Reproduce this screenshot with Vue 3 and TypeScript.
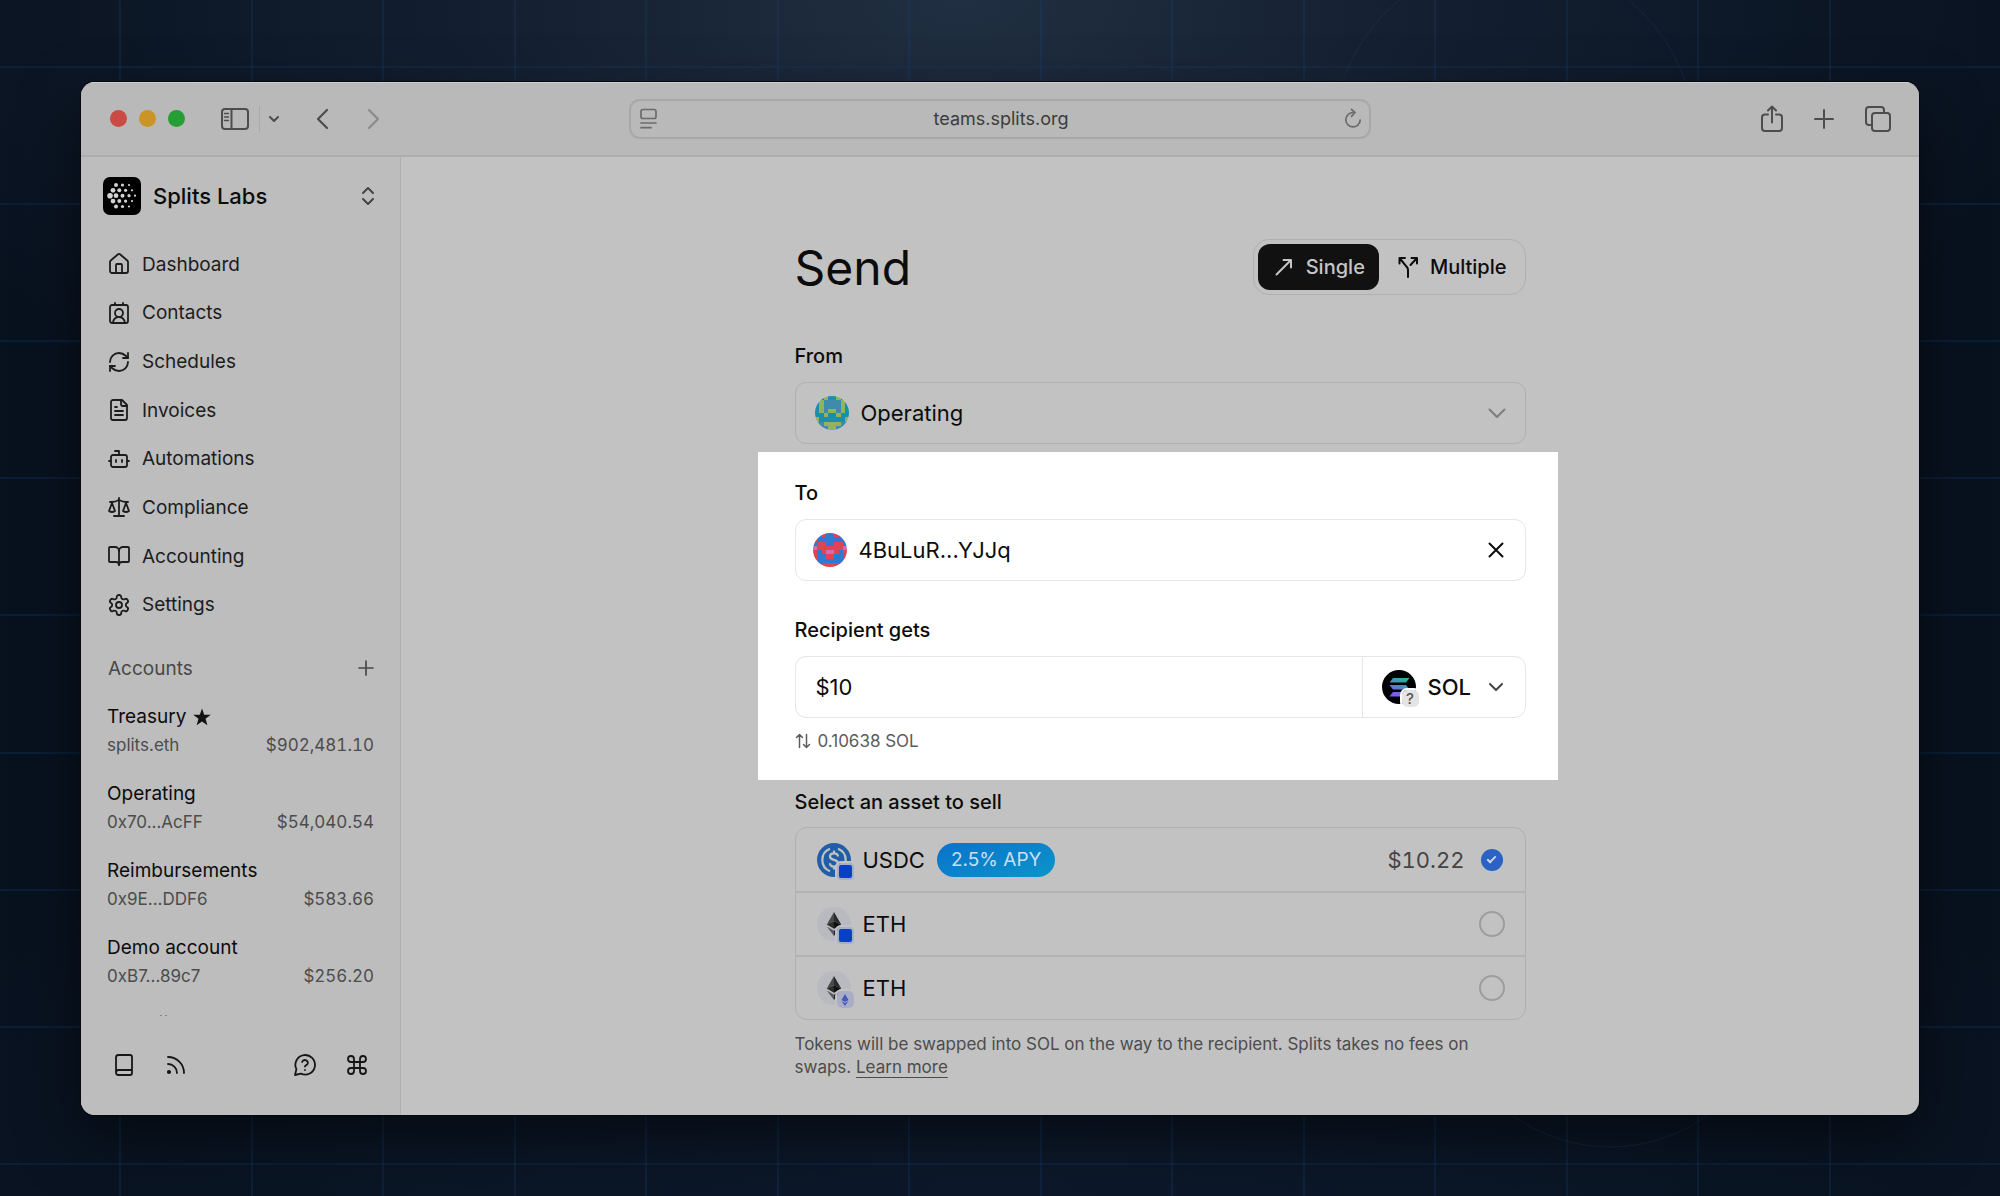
<script setup lang="ts">
import { ref } from 'vue'

interface NavItem { label: string; paths: string[] }
interface Account { name: string; address: string; balance: string; starred?: boolean }
interface Asset { id: string; symbol: string; coin: 'usdc' | 'eth'; chain: 'base' | 'mainnet'; apy?: string; value?: string }

const navItems: NavItem[] = [
  { label: 'Dashboard', paths: ['M15 21v-8a1 1 0 0 0-1-1h-4a1 1 0 0 0-1 1v8', 'M3 10a2 2 0 0 1 .709-1.528l7-5.999a2 2 0 0 1 2.582 0l7 5.999A2 2 0 0 1 21 10v9a2 2 0 0 1-2 2H5a2 2 0 0 1-2-2z'] },
  { label: 'Contacts', paths: ['M16 2v2M8 2v2M17.915 22a6 6 0 0 0-12 0', 'M16 12a4 4 0 1 1-8 0a4 4 0 1 1 8 0z', 'M5 4h14a2 2 0 0 1 2 2v14a2 2 0 0 1-2 2H5a2 2 0 0 1-2-2V6a2 2 0 0 1 2-2z'] },
  { label: 'Schedules', paths: ['M3 12a9 9 0 0 1 9-9 9.75 9.75 0 0 1 6.74 2.74L21 8', 'M21 3v5h-5', 'M21 12a9 9 0 0 1-9 9 9.75 9.75 0 0 1-6.74-2.74L3 16', 'M8 16H3v5'] },
  { label: 'Invoices', paths: ['M15 2H6a2 2 0 0 0-2 2v16a2 2 0 0 0 2 2h12a2 2 0 0 0 2-2V7z', 'M14 2v4a2 2 0 0 0 2 2h4', 'M10 9H8M16 13H8M16 17H8'] },
  { label: 'Automations', paths: ['M12 8V4H8', 'M6 8h12a2 2 0 0 1 2 2v8a2 2 0 0 1-2 2H6a2 2 0 0 1-2-2v-8a2 2 0 0 1 2-2z', 'M2 14h2M20 14h2M15 13v2M9 13v2'] },
  { label: 'Compliance', paths: ['m16 16 3-8 3 8c-.87.65-1.92 1-3 1s-2.13-.35-3-1Z', 'm2 16 3-8 3 8c-.87.65-1.92 1-3 1s-2.13-.35-3-1Z', 'M7 21h10M12 3v18', 'M3 7h2c2 0 5-1 7-2 2 1 5 2 7 2h2'] },
  { label: 'Accounting', paths: ['M12 7v14', 'M3 18a1 1 0 0 1-1-1V4a1 1 0 0 1 1-1h5a4 4 0 0 1 4 4 4 4 0 0 1 4-4h5a1 1 0 0 1 1 1v13a1 1 0 0 1-1 1h-6a3 3 0 0 0-3 3 3 3 0 0 0-3-3z'] },
  { label: 'Settings', paths: ['M12.22 2h-.44a2 2 0 0 0-2 2v.18a2 2 0 0 1-1 1.73l-.43.25a2 2 0 0 1-2 0l-.15-.08a2 2 0 0 0-2.73.73l-.22.38a2 2 0 0 0 .73 2.73l.15.1a2 2 0 0 1 1 1.72v.51a2 2 0 0 1-1 1.74l-.15.09a2 2 0 0 0-.73 2.73l.22.38a2 2 0 0 0 2.73.73l.15-.08a2 2 0 0 1 2 0l.43.25a2 2 0 0 1 1 1.73V20a2 2 0 0 0 2 2h.44a2 2 0 0 0 2-2v-.18a2 2 0 0 1 1-1.73l.43-.25a2 2 0 0 1 2 0l.15.08a2 2 0 0 0 2.73-.73l.22-.39a2 2 0 0 0-.73-2.73l-.15-.08a2 2 0 0 1-1-1.74v-.5a2 2 0 0 1 1-1.74l.15-.09a2 2 0 0 0 .73-2.73l-.22-.38a2 2 0 0 0-2.73-.73l-.15.08a2 2 0 0 1-2 0l-.43-.25a2 2 0 0 1-1-1.73V4a2 2 0 0 0-2-2z', 'M15 12a3 3 0 1 1-6 0a3 3 0 1 1 6 0z'] },
]

const accounts: Account[] = [
  { name: 'Treasury', address: 'splits.eth', balance: '$902,481.10', starred: true },
  { name: 'Operating', address: '0x70...AcFF', balance: '$54,040.54' },
  { name: 'Reimbursements', address: '0x9E...DDF6', balance: '$583.66' },
  { name: 'Demo account', address: '0xB7...89c7', balance: '$256.20' },
]

const assets: Asset[] = [
  { id: 'usdc-base', symbol: 'USDC', coin: 'usdc', chain: 'base', apy: '2.5% APY', value: '$10.22' },
  { id: 'eth-base', symbol: 'ETH', coin: 'eth', chain: 'base' },
  { id: 'eth-mainnet', symbol: 'ETH', coin: 'eth', chain: 'mainnet' },
]

// Logo dots: x, y, radius
const dots: number[][] = [
  [13, 8, 2], [19.5, 8, 1.6], [26, 8, 1.1],
  [10, 13.3, 2.4], [16.3, 13.3, 2], [22.6, 13.3, 1.6], [29, 13.3, 1.1],
  [7, 18.7, 2.8], [13, 18.7, 2.4], [19.5, 18.7, 2], [26, 18.7, 1.6], [32, 18.7, 1.1],
  [10, 24.1, 2.4], [16.3, 24.1, 2], [22.6, 24.1, 1.6], [29, 24.1, 1.1],
  [13, 29.5, 2], [19.5, 29.5, 1.6], [26, 29.5, 1.1],
]

// Wallpaper grid lines
const columns: number[] = Array.from({ length: 14 }, (_, i) => Math.round(120 + i * 131.5))
const rows: number[] = Array.from({ length: 9 }, (_, i) => Math.round(67 + i * 137.1))

// Identicons: one letter per cell, mapped to a colour
const operatingGrid = ['aagaagaa', 'agbbbbga', 'agbbbbga', 'agbggbga', 'aagaagaa', 'gaaaaaag', 'bbggggbb', 'bbbggbbb']
const recipientGrid = ['bbrbbrbb', 'rbbbbbbr', 'brrbbrrb', 'prrrrrrp', 'rbrpprbr', 'rbbrrbbr', 'rbbbbbbr', 'bbrrrrbb']
const operatingColors: Record<string, string> = { a: '#1a8fad', b: '#3e8bab', g: '#93b35a' }
const recipientColors: Record<string, string> = { b: '#2f78d6', r: '#df4453', p: '#d070a8' }

const mode = ref<'single' | 'multiple'>('single')
const from = ref('Operating')
const recipient = ref('4BuLuR...YJJq')
const amount = ref('$10')
const token = ref('SOL')
const selected = ref('usdc-base')
</script>

<template>
  <div class="desktop">
    <svg class="wallpaper" aria-hidden="true">
      <g class="columns"><line v-for="x in columns" :key="x" :x1="x" :x2="x" y1="0" y2="100%" /></g>
      <g class="rows"><line v-for="y in rows" :key="y" x1="0" x2="100%" :y1="y" :y2="y" /></g>
      <circle cx="1514" cy="140" r="181" />
      <circle cx="1610" cy="981" r="166" />
    </svg>
    <div class="window">
      <header class="toolbar">
        <div class="bar-left">
          <div class="lights"><i class="red" /><i class="amber" /><i class="green" /></div>
          <button class="tool panel" aria-label="Sidebar">
            <svg width="28" height="24" viewBox="0 0 28 24"><rect x="1" y="2" width="26" height="20" rx="3" /><path d="M10.500 2v20" /><path d="M3.500 6.500h4M3.500 10h4M3.500 13.500h4" stroke-width="1.300" /></svg>
          </button>
          <span class="rule" />
          <button class="tool down" aria-label="Tab groups">
            <svg width="12" height="12" viewBox="0 0 12 12"><path d="m2 4 4 4 4-4" stroke-width="2" /></svg>
          </button>
          <button class="tool back" aria-label="Back">
            <svg width="14" height="24" viewBox="0 0 14 24"><path d="M12 3 3 12l9 9" stroke-width="2.200" /></svg>
          </button>
          <button class="tool forward" aria-label="Forward">
            <svg width="14" height="24" viewBox="0 0 14 24"><path d="m2 3 9 9-9 9" stroke-width="2.200" /></svg>
          </button>
        </div>
        <div class="address">
          <svg width="18" height="22" viewBox="0 0 18 22"><rect x="1" y="1.500" width="15" height="9" rx="2" /><path d="M1 15h15M1 19.700h10" /></svg>
          <input type="text" value="teams.splits.org" aria-label="Address">
          <svg width="18" height="22" viewBox="0 0 18 22"><path d="M9.500 4.500A7.200 7.200 0 1 0 16.200 12" /><path d="m7.500 1.500 3.500 3-3.500 3.800" /></svg>
        </div>
        <div class="bar-right">
          <button class="tool" aria-label="Share">
            <svg width="22" height="28" viewBox="0 0 22 28"><path d="M7 9.500H4a3 3 0 0 0-3 3V23a3 3 0 0 0 3 3h14a3 3 0 0 0 3-3V12.500a3 3 0 0 0-3-3h-3M11 17.500V2M7 5.500 11 1.500l4 4" /></svg>
          </button>
          <button class="tool" aria-label="New tab">
            <svg width="20" height="20" viewBox="0 0 20 20"><path d="M10 1v18M1 10h18" /></svg>
          </button>
          <button class="tool" aria-label="Tabs">
            <svg width="26" height="26" viewBox="0 0 26 26"><path d="M7 19H4a3 3 0 0 1-3-3V4a3 3 0 0 1 3-3h12a3 3 0 0 1 3 3v2.500" /><rect x="7" y="7" width="18" height="18" rx="3" /></svg>
          </button>
        </div>
      </header>

      <div class="body">
        <aside class="sidebar">
          <button class="org">
            <svg width="38" height="38" viewBox="0 0 38 38" aria-hidden="true">
              <rect width="38" height="38" rx="7" />
              <circle v-for="(d, i) in dots" :key="i" :cx="d[0]" :cy="d[1]" :r="d[2]" fill="#d2d2d2" />
            </svg>
            <span>Splits Labs</span>
            <svg class="line" width="14" height="20" viewBox="0 0 14 20"><path d="m2 7 5-5 5 5M2 13l5 5 5-5" /></svg>
          </button>
          <nav class="nav">
            <a v-for="item in navItems" :key="item.label" href="#">
              <svg class="line" width="24" height="24" viewBox="0 0 24 24"><path v-for="p in item.paths" :key="p" :d="p" /></svg>
              {{ item.label }}
            </a>
          </nav>
          <div class="heading">
            <h2>Accounts</h2>
            <button class="tool" aria-label="Add account">
              <svg width="16" height="16" viewBox="0 0 16 16"><path d="M8 1v14M1 8h14" stroke-width="1.700" /></svg>
            </button>
          </div>
          <div class="accounts">
            <a v-for="a in accounts" :key="a.name" href="#">
              <strong>{{ a.name }}
                <svg v-if="a.starred" width="18" height="18" viewBox="0 0 18 18"><path d="m9 .5 2.200 6.200 6.600.1-5.300 4 1.900 6.400L9 13.400l-5.400 3.800 1.900-6.400-5.300-4 6.600-.1z" fill="#111" /></svg>
              </strong>
              <span><em>{{ a.address }}</em><em class="number">{{ a.balance }}</em></span>
            </a>
          </div>
          <div class="more"><i /><i /></div>
          <footer class="links">
            <button class="tool" aria-label="Docs"><svg width="24" height="24" viewBox="0 0 24 24"><path d="M4 19V4.500A2.500 2.500 0 0 1 6.500 2H18a2 2 0 0 1 2 2v16a2 2 0 0 1-2 2H6.500A2.500 2.500 0 0 1 4 19.500 2.500 2.500 0 0 1 6.500 17H20" /></svg></button>
            <button class="tool" aria-label="Updates"><svg width="24" height="24" viewBox="0 0 24 24"><path d="M4 11a9 9 0 0 1 9 9M4 4a16 16 0 0 1 16 16" /><circle cx="5" cy="19" r="1.200" fill="#111" /></svg></button>
            <span />
            <button class="tool" aria-label="Help"><svg width="24" height="24" viewBox="0 0 24 24"><path d="M7.900 20.600A9.800 9.800 0 1 0 3.400 16.100L2 22Z" /><path d="M9.090 9a3 3 0 0 1 5.830 1c0 2-3 2.500-3 3.500M12 17h.01" /></svg></button>
            <button class="tool" aria-label="Shortcuts"><svg width="24" height="24" viewBox="0 0 24 24"><path d="M15 6v12a3 3 0 1 0 3-3H6a3 3 0 1 0 3 3V6a3 3 0 1 0-3 3h12a3 3 0 1 0-3-3" /></svg></button>
          </footer>
        </aside>

        <main class="main">
          <form class="form" @submit.prevent>
            <div class="title">
              <h1>Send</h1>
              <div class="switch">
                <button type="button" :class="{ on: mode === 'single' }" @click="mode = 'single'">
                  <svg width="22" height="22" viewBox="0 0 22 22"><path d="M3.500 18.500 18 4M10.500 4H18v7.500" /></svg>Single
                </button>
                <button type="button" :class="{ on: mode === 'multiple' }" @click="mode = 'multiple'">
                  <svg width="22" height="22" viewBox="0 0 22 22"><path d="M14.500 2H20v5.500M8 2H2.500v5.500M11 21v-7c0-1.500-.4-2.300-1.300-3.200L2.500 2M13.500 9 20 2" /></svg>Multiple
                </button>
              </div>
            </div>

            <label class="label" for="from">From</label>
            <div class="box">
              <svg class="avatar" width="34" height="34" viewBox="0 0 8 8" shape-rendering="crispEdges" aria-hidden="true">
                <template v-for="(row, y) in operatingGrid" :key="y">
                  <rect v-for="(c, x) in row.split('')" :key="x" :x="x" :y="y" width="1" height="1" :fill="operatingColors[c]" />
                </template>
              </svg>
              <select id="from" v-model="from"><option>Operating</option></select>
              <svg class="chevron faint" width="18" height="18" viewBox="0 0 18 18"><path d="m1.500 5.500 7.500 7.500 7.500-7.500" /></svg>
            </div>

            <section class="spotlight">
              <label class="label" for="to">To</label>
              <div class="box to">
                <svg class="avatar" width="34" height="34" viewBox="0 0 8 8" shape-rendering="crispEdges" aria-hidden="true">
                  <template v-for="(row, y) in recipientGrid" :key="y">
                    <rect v-for="(c, x) in row.split('')" :key="x" :x="x" :y="y" width="1" height="1" :fill="recipientColors[c]" />
                  </template>
                </svg>
                <input id="to" v-model="recipient" type="text">
                <button type="button" class="clear" aria-label="Clear recipient" @click="recipient = ''">
                  <svg width="16" height="16" viewBox="0 0 16 16"><path d="m1.500 1.500 13 13M14.500 1.500l-13 13" /></svg>
                </button>
              </div>
              <label class="label gets" for="amount">Recipient gets</label>
              <div class="box amount">
                <input id="amount" v-model="amount" type="text">
                <div class="token">
                  <span class="coin">
                    <svg width="34" height="34" viewBox="0 0 34 34" aria-hidden="true">
                      <defs><linearGradient id="sol" gradientUnits="userSpaceOnUse" x1="10" y1="27" x2="22" y2="7"><stop stop-color="#8a4dff" /><stop offset="0.500" stop-color="#5a80c8" /><stop offset="1" stop-color="#22b59c" /></linearGradient></defs>
                      <circle cx="17" cy="17" r="17" />
                      <path d="M11 8h16.500L24 12.500H7.500zM7.500 15H24l3.500 4.500H11zM11 22h16.500L24 26.500H7.500z" fill="url(#sol)" />
                    </svg>
                    <b class="chain unknown">?</b>
                  </span>
                  <select v-model="token" aria-label="Token"><option>SOL</option></select>
                  <svg class="chevron" width="16" height="16" viewBox="0 0 16 16"><path d="m2 5 6 6 6-6" /></svg>
                </div>
              </div>
              <button type="button" class="convert">
                <svg width="16" height="16" viewBox="0 0 16 16"><path d="M4.500 14.500v-13M1.500 4.500l3-3 3 3M11.500 1.500v13M8.500 11.500l3 3 3-3" /></svg>
                0.10638 SOL
              </button>
            </section>

            <p id="assets" class="label sell">Select an asset to sell</p>
            <div class="assets" role="radiogroup" aria-labelledby="assets">
              <label v-for="a in assets" :key="a.id" class="asset">
                <span class="coin">
                  <svg v-if="a.coin === 'usdc'" width="34" height="34" viewBox="0 0 34 34" aria-hidden="true">
                    <circle cx="17" cy="17" r="17" fill="#205ea8" />
                    <g fill="none" stroke="#c2c2c2" stroke-width="2.200"><path d="M13 5.800a12 12 0 0 0 0 22.400M21 5.800a12 12 0 0 1 0 22.400" /><path d="M21 13.500c0-2-1.600-3.200-4-3.200s-4 1.200-4 3.200c0 4.500 8 2.300 8 6.800 0 2-1.600 3.300-4 3.300s-4-1.200-4-3.300M17 7.500v3M17 23.500v3" /></g>
                  </svg>
                  <svg v-else width="34" height="34" viewBox="0 0 34 34" aria-hidden="true">
                    <circle cx="17" cy="17" r="17" fill="#b9babf" />
                    <path d="M17 5 9.800 17.500 17 14.300z" fill="#4a4a4a" /><path d="m17 5 7.200 12.500L17 14.300z" fill="#2a2a2a" />
                    <path d="M9.800 17.500 17 14.300v7.500z" fill="#2c2c2c" /><path d="m24.200 17.500-7.200-3.200v7.500z" fill="#111" />
                    <path d="m9.800 19.500 7.200 4.300V29z" fill="#5a5a5a" /><path d="M24.200 19.500 17 23.800V29z" fill="#222" />
                  </svg>
                  <b class="chain" :class="a.chain">
                    <svg v-if="a.chain === 'mainnet'" width="8" height="12" viewBox="0 0 8 12" aria-hidden="true"><path d="M4 0 .5 6 4 8l3.500-2zM4 9 .5 7 4 12l3.500-5z" fill="#4459bd" /></svg>
                  </b>
                </span>
                <span>{{ a.symbol }}</span>
                <span v-if="a.apy" class="apy">{{ a.apy }}</span>
                <span class="value number">{{ a.value }}</span>
                <input v-model="selected" type="radio" name="asset" :value="a.id">
              </label>
            </div>
            <p class="note">Tokens will be swapped into SOL on the way to the recipient. Splits takes no fees on swaps. <a href="#">Learn more</a></p>
          </form>
        </main>
      </div>
    </div>
  </div>
</template>

<style>
body {
  margin: 0;
  background: #08111f;
}
</style>

<style scoped>
.desktop {
  position: relative;
  box-sizing: border-box;
  display: flex;
  min-height: 100vh;
  padding: 82px 81px 81px;
  overflow: hidden;
  font-family: Inter, "Liberation Sans", sans-serif;
  color: #0c0c0c;
  background:
    radial-gradient(ellipse 55% 50% at 48% 0, #212f42 0, rgba(24, 36, 56, 0.6) 50%, transparent 100%),
    radial-gradient(ellipse 60% 40% at 50% 100%, #0d192b 0, transparent 100%),
    #08121f;
}
.wallpaper {
  position: absolute;
  inset: 0;
  width: 100%;
  height: 100%;
  fill: none;
  stroke: #1d3c5c;
  stroke-opacity: 0.4;
}
.columns {
  stroke: #17457a;
  stroke-width: 2;
  stroke-opacity: 0.25;
}
.rows {
  stroke: #123a6c;
  stroke-width: 2;
  stroke-opacity: 0.3;
}
.window {
  position: relative;
  flex: 1;
  display: flex;
  flex-direction: column;
  min-width: 0;
  border-radius: 14px;
  overflow: hidden;
  background: #c2c2c2;
  box-shadow: 0 0 0 1px #05080f, 0 24px 60px rgba(0, 0, 0, 0.5);
}
button, input, select {
  font: inherit;
  color: inherit;
  margin: 0;
  padding: 0;
  border: 0;
  background: none;
  min-width: 0;
  outline: 0;
}
select, input[type='radio'] {
  appearance: none;
}
a {
  color: inherit;
  text-decoration: none;
}
svg {
  flex: none;
  display: block;
}
.tool svg, .line, .address svg, .chevron, .switch svg, .clear svg, .convert svg {
  fill: none;
  stroke: currentColor;
  stroke-width: 2;
  stroke-linecap: round;
  stroke-linejoin: round;
}
.number {
  font-variant-numeric: tabular-nums;
}
.toolbar {
  display: grid;
  grid-template-columns: 1fr minmax(0, 742px) 1fr;
  align-items: center;
  height: 73px;
  padding: 0 28px;
  border-bottom: 2px solid #adadad;
  background: #b9b9b9;
  box-shadow: inset 0 1px #cfcfcf;
  color: #4d4d4d;
}
.bar-left, .bar-right {
  display: flex;
  align-items: center;
}
.bar-right {
  justify-content: flex-end;
  gap: 31px;
}
.lights {
  display: flex;
  gap: 12px;
  margin-left: 1px;
}
.lights i {
  width: 17px;
  height: 17px;
  border-radius: 50%;
}
.red { background: #c94b44; }
.amber { background: #cb9427; }
.green { background: #249e35; }
.panel { margin-left: 36px; }
.rule {
  width: 1px;
  height: 26px;
  margin-left: 10px;
  background: #a9a9a9;
}
.down { margin-left: 8px; }
.back { margin-left: 35px; }
.forward {
  margin-left: 38px;
  color: #8a8a8a;
}
.address {
  display: flex;
  align-items: center;
  box-sizing: border-box;
  height: 40px;
  padding: 0 7px 0 9px;
  border: 2px solid #a8a8a8;
  border-radius: 11px;
  color: #6b6b6b;
}
.address svg { stroke-width: 1.7; }
.address input {
  flex: 1;
  text-align: center;
  font-size: 18px;
  color: #3c3c3c;
}
.body {
  flex: 1;
  display: flex;
}
.sidebar {
  box-sizing: border-box;
  display: flex;
  flex-direction: column;
  width: 320px;
  padding: 20px 25px 0 22px;
  border-right: 1px solid #afafaf;
  background: #bdbdbd;
}
.org {
  display: flex;
  align-items: center;
  gap: 12px;
  text-align: left;
  font-size: 22px;
  font-weight: 500;
}
.org span { flex: 1; }
.org .line { color: #444; }
.nav {
  display: flex;
  flex-direction: column;
  height: 389px;
  margin: 25px 0 0 4px;
}
.nav a {
  flex: 1;
  display: flex;
  align-items: center;
  gap: 11px;
  font-size: 19px;
  color: #1c1c1c;
}
.nav .line, .links svg { stroke-width: 1.8; }
.heading {
  display: flex;
  align-items: center;
  justify-content: space-between;
  height: 28px;
  margin: 25px 1px 0 5px;
  color: #484848;
}
h2 {
  margin: 0;
  font-size: 19px;
  font-weight: 400;
}
.accounts {
  display: flex;
  flex-direction: column;
  gap: 21px;
  margin: 20px 1px 0 4px;
}
.accounts strong {
  display: flex;
  align-items: center;
  gap: 7px;
  font-size: 19px;
  line-height: 30px;
  font-weight: 400;
  color: #0c0c0c;
}
.accounts span {
  display: flex;
  justify-content: space-between;
  font-size: 17px;
  line-height: 26px;
  color: #4c4c4c;
}
.accounts em { font-style: normal; }
.more {
  display: flex;
  gap: 3px;
  margin: 26px 0 0 57px;
}
.more i {
  width: 2px;
  height: 1px;
  background: #858585;
}
.links {
  display: flex;
  align-items: center;
  margin: 37px 6px 0 9px;
  gap: 28px;
  color: #161616;
}
.links span { flex: 1; }
.main {
  flex: 1;
  display: flex;
  justify-content: center;
}
.form {
  width: 731px;
  padding-top: 82px;
}
.title {
  display: flex;
  align-items: center;
  justify-content: space-between;
  height: 56px;
}
h1 {
  margin: 0;
  font-size: 48px;
  font-weight: 400;
}
.switch {
  display: flex;
  gap: 3px;
  box-sizing: border-box;
  height: 56px;
  padding: 4px;
  border: 1px solid #b0b0b0;
  border-radius: 16px;
}
.switch button {
  display: flex;
  align-items: center;
  gap: 11px;
  padding: 0 14px 0 15px;
  border-radius: 12px;
  font-size: 20px;
  font-weight: 500;
}
.switch svg { stroke-width: 2; }
.switch .on {
  background: #111;
  color: #c6c6c6;
}
.label {
  display: block;
  margin: 47px 0 12px;
  font-size: 20px;
  line-height: 28px;
  font-weight: 500;
}
.box {
  display: flex;
  align-items: center;
  box-sizing: border-box;
  height: 62px;
  padding: 0 19px;
  border: 1px solid #b0b0b0;
  border-radius: 11px;
  font-size: 22px;
}
.avatar { border-radius: 50%; }
.box select, .box input {
  flex: 1;
  margin-left: 12px;
}
.faint { color: #7d7d7d; }
.faint, .token .chevron, .clear svg { stroke-width: 2; }
.spotlight {
  margin: 8px -32px 0 -37px;
  padding: 27px 32px 28px 37px;
  background: #fff;
}
.spotlight .label { margin-top: 0; }
.spotlight .gets { margin-top: 35px; }
.spotlight .box { border-color: #e6e6e6; }
.spotlight .to { padding: 0 21px 0 17px; }
.clear { display: flex; }
.spotlight .amount {
  padding: 0;
  align-items: stretch;
}
.box.amount > input { margin-left: 20px; }
.token {
  display: flex;
  align-items: center;
  box-sizing: border-box;
  width: 163px;
  padding: 0 21px 0 19px;
  border-left: 1px solid #e6e6e6;
  font-weight: 500;
}
.token .chevron { color: #444; }
.coin {
  position: relative;
  flex: none;
}
.chain {
  position: absolute;
  right: -3px;
  bottom: -3px;
  display: flex;
  align-items: center;
  justify-content: center;
  width: 17px;
  height: 17px;
  border-radius: 5px;
  outline: 2px solid #c2c2c2;
}
.unknown {
  background: #e4e4e4;
  outline-color: #fff;
  font-size: 15px;
  font-weight: 500;
  color: #555;
}
.base {
  box-sizing: border-box;
  border: 2px solid #a6aed0;
  border-radius: 4px;
  background: #0a40c8;
}
.mainnet { background: #a9aec6; }
.convert {
  display: flex;
  align-items: center;
  gap: 7px;
  margin-top: 12px;
  font-size: 17px;
  line-height: 22px;
  color: #5c5c5c;
}
.convert svg { stroke-width: 1.5; }
.label.sell { margin: 8px 0 11px; }
.assets {
  border: 1px solid #afafaf;
  border-radius: 12px;
}
.asset {
  display: flex;
  align-items: center;
  gap: 12px;
  height: 63px;
  padding: 0 20px 0 21px;
  font-size: 22px;
}
.asset + .asset { border-top: 2px solid #b3b3b3; height: 62px; }
.apy {
  padding: 0 14px;
  border-radius: 18px;
  font-size: 19px;
  line-height: 34px;
  color: #c9dff0;
  background: linear-gradient(160deg, #0b72cc, #0b95c8);
}
.value {
  margin-left: auto;
  margin-right: 4px;
  color: #444;
}
.asset input {
  box-sizing: border-box;
  width: 26px;
  height: 26px;
  border: 2px solid #9d9d9d;
  border-radius: 50%;
}
.asset input:checked {
  display: grid;
  place-content: center;
  width: 22px;
  height: 22px;
  margin-right: 2px;
  border: 0;
  background: #2b62c4;
}
.asset input:checked::after {
  content: '';
  width: 7px;
  height: 3px;
  margin-bottom: 3px;
  border-left: 2px solid #c9d3e8;
  border-bottom: 2px solid #c9d3e8;
  transform: rotate(-45deg);
}
.note {
  margin: 13px 0 0;
  font-size: 17px;
  line-height: 23px;
  color: #4c4c4c;
}
.note a {
  text-decoration: underline;
  text-underline-offset: 4px;
}
</style>
